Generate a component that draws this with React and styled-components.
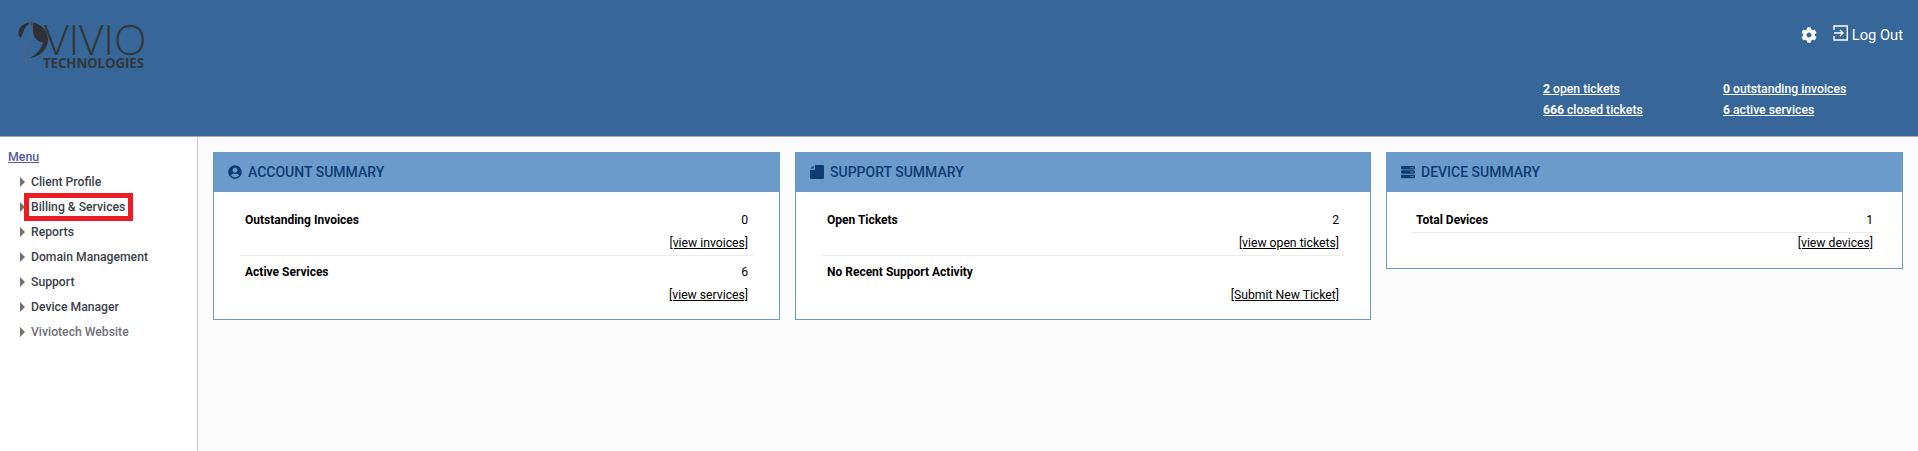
import React from 'react';
import styled, { createGlobalStyle } from 'styled-components';
import { FaCog, FaUserCircle, FaServer } from 'react-icons/fa';

const Global = createGlobalStyle`
  html, body { margin: 0; padding: 0; background: #fcfcfc; }
  body { font-family: Roboto, "Liberation Sans", sans-serif; font-size: 12.2px; color: #000; }
  * { box-sizing: border-box; }
`;

const Page = styled.div`
  width: 1918px;
  height: 451px;
  display: flex;
  flex-direction: column;
  overflow: hidden;
`;

const Header = styled.header`
  height: 137px;
  flex: none;
  background: #366798;
  border-bottom: 1px solid #a9a9a9;
  display: flex;
  justify-content: space-between;
  padding: 21px 15px 0 18px;
`;

const Logo = styled.div`
  position: relative;
  width: 130px;
  height: 46px;
`;

const LogoMark = styled.svg`
  position: absolute;
  left: 0;
  top: 1px;
  width: 32px;
  height: 44px;
`;

const LogoName = styled.div`
  position: absolute;
  left: 26px;
  top: 2px;
  font-family: "Open Sans", sans-serif;
  font-weight: 300;
  font-size: 43px;
  line-height: 32px;
  letter-spacing: -0.4px;
  color: #33363b;
`;

const LogoSub = styled.div`
  position: absolute;
  left: 25px;
  top: 36px;
  font-family: "Open Sans", sans-serif;
  font-weight: 700;
  font-size: 13.3px;
  line-height: 12px;
  letter-spacing: -0.1px;
  color: #33363b;
`;

const HeaderRight = styled.div`
  display: flex;
  flex-direction: column;
  align-items: flex-end;
`;

const TopLinks = styled.div`
  display: flex;
  align-items: center;
  color: #fff;
  font-size: 14.7px;
  height: 28px;
`;

const Gear = styled(FaCog)`
  width: 16px;
  height: 16px;
  margin-right: 16px;
`;

const LogOutIcon = styled.svg`
  width: 16px;
  height: 16px;
  margin-right: 3px;
  margin-top: -4px;
`;

const Stats = styled.div`
  margin-top: 32px;
  display: grid;
  grid-template-columns: 180px 180px;
  row-gap: 5px;
`;

const Stat = styled.a`
  color: #fff;
  font-size: 12.2px;
  font-weight: 500;
  line-height: 16px;
  text-decoration: underline;
  b { font-weight: 700; }
`;

const Body = styled.div`
  flex: 1;
  display: flex;
`;

const Sidebar = styled.nav`
  width: 198px;
  flex: none;
  border-right: 1px solid #c8c8c8;
  background: #fff;
  padding: 12px 0 0 8px;
`;

const MenuTitle = styled.a`
  display: block;
  color: #565b9c;
  font-size: 12.4px;
  font-weight: 500;
  line-height: 16px;
  text-decoration: underline;
  margin-bottom: 4px;
`;

const NavList = styled.ul`
  list-style: none;
  margin: 0;
  padding: 0 0 0 12px;
`;

const NavItem = styled.li`
  display: flex;
  align-items: center;
  height: 25px;
  color: ${p => (p.$muted ? '#6f7178' : '#3c3f48')};
  font-weight: 500;
  font-size: 12.2px;
  position: relative;
`;

const Arrow = styled.span`
  width: 0;
  height: 0;
  border-left: 5px solid #74716c;
  border-top: 5px solid transparent;
  border-bottom: 5px solid transparent;
  margin-right: 6px;
`;

const Highlight = styled.span`
  position: absolute;
  left: 4px;
  top: -1px;
  width: 109px;
  height: 28px;
  border: 5px solid #ec1c24;
`;

const Main = styled.main`
  flex: 1;
  padding: 15px 15px 0;
  display: grid;
  grid-template-columns: 567px 576px 517px;
  column-gap: 15px;
  align-items: start;
`;

const Card = styled.section`
  background: #fff;
  border: 1px solid #6b9bcb;
  border-top: 0;
`;

const CardHead = styled.div`
  height: 40px;
  margin: 0 -1px;
  background: #6b9bcb;
  display: flex;
  align-items: center;
  padding-left: 15px;
  color: #0e3c72;
  font-size: 14px;
  font-weight: 500;
  svg { width: 14px; height: 14px; margin-right: 6px; flex: none; }
`;

const CardBody = styled.div`
  padding: ${p => (p.$tight ? '16px 24px 13px' : '16px 26px 12px')};
`;

const Row = styled.div`
  padding: ${p => p.$top ?? 4}px 5px 0;
  border-top: ${p => (p.$divided ? '1px solid #ebebeb' : '0')};
`;

const RowLine = styled.div`
  display: flex;
  justify-content: space-between;
  line-height: 16px;
  font-size: 12.2px;
  padding-bottom: ${p => (p.$alone ? '4px' : '0')};
`;

const Label = styled.span`
  font-weight: 700;
  font-size: 12px;
`;

const Action = styled.div`
  text-align: right;
  line-height: 16px;
  margin-top: ${p => (p.$tight ? '0' : '7px')};
  padding-bottom: 4px;
`;

const ActionLink = styled.a`
  color: #000;
  text-decoration: underline;
`;

const FileIcon = () => (
  <svg viewBox="0 0 14 14" fill="#0e3c72">
    <path d="M5 0h8a1 1 0 0 1 1 1v12a1 1 0 0 1-1 1H1a1 1 0 0 1-1-1V5h4a1 1 0 0 0 1-1z" />
    <path d="M3.6 0.4v3.2H0.4z" />
  </svg>
);

const navItems = ['Client Profile', 'Billing & Services', 'Reports', 'Domain Management', 'Support', 'Device Manager'];

export default function App() {
  return (
    <Page>
      <Global />
      <Header>
        <Logo>
          <LogoMark viewBox="0 0 32 44">
            <path d="M0.3 11C.8 5 6 .8 12.5 .5 9 3 6.5 6 5.2 10 4.5 12 3.8 14 3 16 1.2 15 .2 13 .3 11z" fill="#2f3136" />
            <path d="M13 .5C20 .8 26.5 5 29 12 30.6 17 30.4 21 28.3 25 25 31 19 35.2 12 35.8 18 32.8 23 27.5 25 20.5 22 20 19 18.5 16.8 15.5 15 12 14.5 6 13 .5z" fill="#2f3136" />
            <path d="M14 1C15 6 15 11 12 15 9 19 7 24 7 29 7 34 8 39 8 43" fill="none" stroke="#5a6572" strokeWidth="1" />
          </LogoMark>
          <LogoName>VIVIO</LogoName>
          <LogoSub>TECHNOLOGIES</LogoSub>
        </Logo>
        <HeaderRight>
          <TopLinks>
            <Gear />
            <LogOutIcon viewBox="0 0 16 16" fill="none" stroke="#fff" strokeWidth="1.4">
              <path d="M1 5V1h13.3v14H1v-4" />
              <path d="M1 8h8.5M7 5l3 3-3 3" />
            </LogOutIcon>
            Log Out
          </TopLinks>
          <Stats>
            <Stat><b>2</b> open tickets</Stat>
            <Stat><b>0</b> outstanding invoices</Stat>
            <Stat><b>666</b> closed tickets</Stat>
            <Stat><b>6</b> active services</Stat>
          </Stats>
        </HeaderRight>
      </Header>
      <Body>
        <Sidebar>
          <MenuTitle>Menu</MenuTitle>
          <NavList>
            {navItems.map(item => (
              <NavItem key={item}>
                <Arrow />
                {item}
                {item === 'Billing & Services' && <Highlight />}
              </NavItem>
            ))}
            <NavItem $muted>
              <Arrow />
              Viviotech Website
            </NavItem>
          </NavList>
        </Sidebar>
        <Main>
          <Card>
            <CardHead><FaUserCircle />ACCOUNT SUMMARY</CardHead>
            <CardBody>
              <Row>
                <RowLine><Label>Outstanding Invoices</Label><span>0</span></RowLine>
                <Action><ActionLink>[view invoices]</ActionLink></Action>
              </Row>
              <Row $divided $top={8}>
                <RowLine><Label>Active Services</Label><span>6</span></RowLine>
                <Action><ActionLink>[view services]</ActionLink></Action>
              </Row>
            </CardBody>
          </Card>
          <Card>
            <CardHead><FileIcon />SUPPORT SUMMARY</CardHead>
            <CardBody>
              <Row>
                <RowLine><Label>Open Tickets</Label><span>2</span></RowLine>
                <Action><ActionLink>[view open tickets]</ActionLink></Action>
              </Row>
              <Row $divided $top={8}>
                <RowLine><Label>No Recent Support Activity</Label></RowLine>
                <Action><ActionLink>[Submit New Ticket]</ActionLink></Action>
              </Row>
            </CardBody>
          </Card>
          <Card>
            <CardHead><FaServer />DEVICE SUMMARY</CardHead>
            <CardBody $tight>
              <Row>
                <RowLine $alone><Label>Total Devices</Label><span>1</span></RowLine>
              </Row>
              <Row $divided $top={2}>
                <Action $tight><ActionLink>[view devices]</ActionLink></Action>
              </Row>
            </CardBody>
          </Card>
        </Main>
      </Body>
    </Page>
  );
}
